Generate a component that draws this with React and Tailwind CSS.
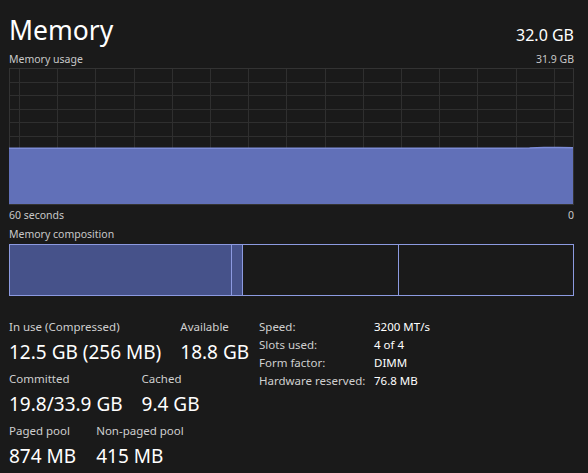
const font = { fontFamily: '"Noto Sans", "Open Sans", sans-serif' };

// memory usage history, percent of total, oldest first
const usage = [
  41, 41, 41, 41, 41, 41, 41, 41, 41, 41, 41, 41, 41, 41, 41, 41, 41, 41, 41, 41,
  41, 41, 41, 41, 41, 41, 41, 41, 41, 41, 41, 41, 41, 41, 41, 41, 41.2, 41.6, 41.6, 41.3,
];

function UsageGraph() {
  const w = 564;
  const h = 136;
  const cols = [];
  for (let x = 10; x < w; x += 38.2) cols.push(Math.round(x) + 0.5);
  const rows = [];
  for (let i = 1; i < 10; i++) rows.push(Math.round(i * 13.6) + 0.5);
  const step = w / (usage.length - 1);
  const pts = usage.map((v, i) => `${(i * step).toFixed(1)},${(h - (v / 100) * h).toFixed(1)}`);
  const area = `M0,${h} L${pts.join(' L')} L${w},${h} Z`;
  const line = `M${pts.join(' L')}`;
  return (
    <svg width={w + 1} height={h + 1} className="block">
      {cols.map((x) => (
        <line key={'c' + x} x1={x} y1={0} x2={x} y2={h} stroke="#2f2f2f" />
      ))}
      {rows.map((y) => (
        <line key={'r' + y} x1={0} y1={y} x2={w} y2={y} stroke="#2f2f2f" />
      ))}
      <rect x={0.5} y={0.5} width={w} height={h} fill="none" stroke="#333" />
      <path d={area} fill="#6170b8" />
      <path d={line} fill="none" stroke="#7d8cd6" strokeWidth="1.5" />
    </svg>
  );
}

function Stat({ label, value }) {
  return (
    <div className="flex flex-col whitespace-nowrap">
      <span className="text-[11.5px] leading-[18px] text-[#cfcfcf]">{label}</span>
      <span className="text-[19px] leading-[28px] mt-[2px]">{value}</span>
    </div>
  );
}

export default function App() {
  return (
    <div className="w-[588px] h-[473px] bg-[#1a1a1a] text-white pl-[9px] pr-[14px] overflow-hidden" style={font}>
      <div className="flex justify-between items-end pt-[12px]">
        <span className="text-[26.5px] leading-[36px]">Memory</span>
        <span className="text-[16px] leading-[22px] mb-[2px]">32.0 GB</span>
      </div>
      <div className="flex justify-between text-[10.5px] leading-[16px] text-[#c8c8c8] mt-[3px]">
        <span>Memory usage</span>
        <span>31.9 GB</span>
      </div>
      <div className="mt-[1px]">
        <UsageGraph />
      </div>
      <div className="flex justify-between text-[10.5px] leading-[16px] text-[#c8c8c8] mt-[2px]">
        <span>60 seconds</span>
        <span>0</span>
      </div>
      <div className="text-[10.5px] leading-[16px] text-[#c8c8c8] mt-[3px]">Memory composition</div>
      <div className="flex h-[52px] mt-[2px] border border-[#8c9ae0]">
        <div className="w-[222px] bg-[#46528a] border-r border-[#8c9ae0]" />
        <div className="w-[11px] bg-[#46528a] border-r border-[#8c9ae0]" />
        <div className="w-[156px] border-r border-[#8c9ae0]" />
        <div className="flex-1" />
      </div>

      <div className="flex mt-[22px]">
        <div className="w-[250px] flex flex-col gap-[4px]">
          <div className="flex gap-[19px]">
            <Stat label="In use (Compressed)" value="12.5 GB (256 MB)" />
            <Stat label="Available" value="18.8 GB" />
          </div>
          <div className="flex gap-[19px]">
            <Stat label="Committed" value="19.8/33.9 GB" />
            <Stat label="Cached" value="9.4 GB" />
          </div>
          <div className="flex gap-[20px]">
            <Stat label="Paged pool" value="874 MB" />
            <Stat label="Non-paged pool" value="415 MB" />
          </div>
        </div>
        <div className="grid grid-cols-[115px_auto] text-[11.5px] leading-[18px] text-[#cfcfcf] content-start whitespace-nowrap">
          <span>Speed:</span>
          <span className="text-white">3200 MT/s</span>
          <span>Slots used:</span>
          <span className="text-white">4 of 4</span>
          <span>Form factor:</span>
          <span className="text-white">DIMM</span>
          <span>Hardware reserved:</span>
          <span className="text-white">76.8 MB</span>
        </div>
      </div>
    </div>
  );
}
